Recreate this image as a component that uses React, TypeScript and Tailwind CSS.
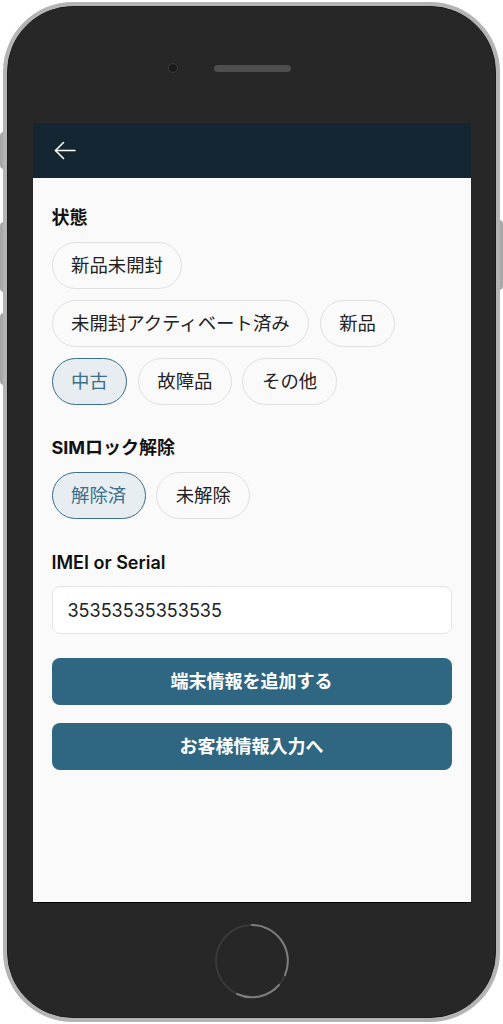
import React from 'react';

const jp = "font-['Inter','Noto_Sans_CJK_JP',sans-serif]";

const conditions = [
  ['新品未開封'],
  ['未開封アクティベート済み', '新品'],
  ['中古', '故障品', 'その他'],
];

function Chip({ label, active }: { label: string; active?: boolean }) {
  return (
    <button
      className={
        'h-[47px] px-[18.5px] rounded-full border text-[18.4px] leading-none ' +
        (active
          ? 'bg-[#e7edf0] border-[#3a6d87] text-[#3b6f8a]'
          : 'bg-[#fafafa] border-[#e0e0e0] text-[#222]')
      }
    >
      {label}
    </button>
  );
}

function HomeButton() {
  // faint full ring, brighter arcs top-right and bottom
  return (
    <svg width="78" height="78" viewBox="0 0 78 78" fill="none" strokeWidth="2" strokeLinecap="round">
      <circle cx="39" cy="39" r="36" stroke="#3a3a3a" />
      <path d="M39 3 A36 36 0 0 1 72 53" stroke="#7c7c7c" />
      <path d="M66 63 A36 36 0 0 1 24 72" stroke="#7c7c7c" />
    </svg>
  );
}

export default function App() {
  const [state, setState] = React.useState('中古');
  const [sim, setSim] = React.useState('解除済');

  return (
    <div className={'relative w-[503px] h-[1024px] bg-white ' + jp}>
      {/* side buttons */}
      <div className="absolute left-0 top-[132px] w-[4px] h-[37px] bg-[#a8a8a8] rounded-l-sm" />
      <div className="absolute left-0 top-[222px] w-[4px] h-[70px] bg-[#a8a8a8] rounded-l-sm" />
      <div className="absolute left-0 top-[313px] w-[4px] h-[72px] bg-[#a8a8a8] rounded-l-sm" />
      <div className="absolute right-0 top-[220px] w-[4px] h-[70px] bg-[#a8a8a8] rounded-r-sm" />

      {/* phone body */}
      <div className="absolute left-[3px] top-[2px] w-[497px] h-[1020px] rounded-[70px] bg-[#b4b4b4] p-[4px]">
        <div className="w-full h-full rounded-[66px] bg-[#272727] border border-[#1c1c1c] flex flex-col items-center">
          <div className="h-[116px] w-full relative flex justify-center">
            <div className="absolute left-[160px] top-[56px] w-[10px] h-[10px] rounded-full bg-[#1a1a1a] border border-[#3c3c3c]" />
            <div className="absolute left-[206px] top-[58px] w-[77px] h-[7px] rounded-full bg-[#4e4e4e]" />
          </div>

          {/* screen */}
          <div className="w-[438px] h-[780px] bg-[#fafafa] border-b border-black flex flex-col">
            <div className="h-[55px] bg-[#132631] flex items-center pl-[21px] shrink-0">
              <svg width="22" height="19" viewBox="0 0 22 19" fill="none" stroke="white" strokeWidth="1.6" strokeLinecap="round" strokeLinejoin="round">
                <path d="M1.5 9.5H21" />
                <path d="M9.5 1.5L1.5 9.5L9.5 17.5" />
              </svg>
            </div>

            <div className="px-[19px] pt-[28px] flex flex-col">
              <div className="text-[18px] font-bold text-[#111] leading-[24px]">状態</div>
              <div className="mt-[12px] flex flex-col gap-[11px]">
                {conditions.map((row, i) => (
                  <div key={i} className="flex gap-[10.5px]">
                    {row.map((c) => (
                      <span key={c} onClick={() => setState(c)}>
                        <Chip label={c} active={state === c} />
                      </span>
                    ))}
                  </div>
                ))}
              </div>

              <div className="mt-[31px] text-[18px] font-bold text-[#111] leading-[24px]">SIMロック解除</div>
              <div className="mt-[12px] flex gap-[10.5px]">
                {['解除済', '未解除'].map((c) => (
                  <span key={c} onClick={() => setSim(c)}>
                    <Chip label={c} active={sim === c} />
                  </span>
                ))}
              </div>

              <div className="mt-[32px] text-[18px] font-semibold text-[#111] leading-[24px]">IMEI or Serial</div>
              <input
                className="mt-[11px] h-[48px] w-full rounded-[8px] border border-[#e4e4e4] bg-white px-[15px] text-[18px] text-[#222] outline-none"
                defaultValue="35353535353535"
              />

              <button className="mt-[24px] h-[47px] w-full rounded-[8px] bg-[#2f6782] text-white text-[18px] font-bold">
                端末情報を追加する
              </button>
              <button className="mt-[18px] h-[47px] w-full rounded-[8px] bg-[#2f6782] text-white text-[18px] font-bold">
                お客様情報入力へ
              </button>
            </div>
          </div>

          <div className="mt-[19px]">
            <HomeButton />
          </div>
        </div>
      </div>
    </div>
  );
}
